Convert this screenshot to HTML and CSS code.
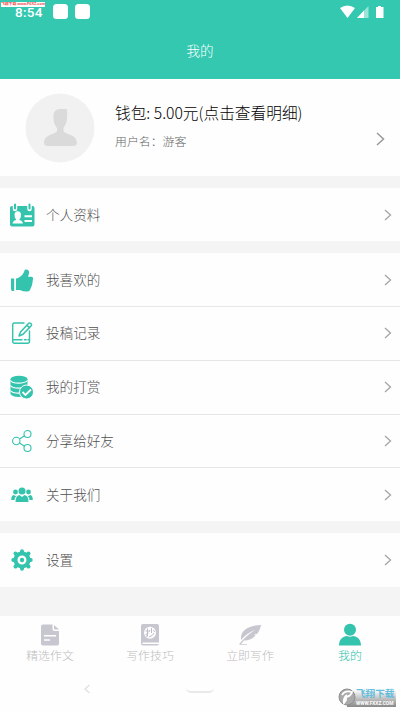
FILE: index.html
```html
<!DOCTYPE html>
<html lang="zh-CN">
<head>
<meta charset="utf-8">
<title>我的</title>
<link rel="stylesheet" href="styles.css">
</head>
<body>
<header class="header">
  <div class="status">
    <span class="clock">8:54</span><i class="note"></i><i class="note"></i>
    <svg class="signals" width="46" height="14" viewBox="0 0 46 14"><path d="M0 3Q7.500-2 15 3L7.500 13Z" fill="#fff"/><path d="M17 13 28.500 1V13Z" fill="#fff" opacity=".5"/><path d="M17 13 24 5.500V13Z" fill="#fff"/><path d="M38 1h3v1h2.500v11h-7.500V2H38Z" fill="#fff"/></svg>
  </div>
  <h1 class="title">我的</h1>
  <span class="stamp">飞翔下载 www.F0XZ.com</span>
</header>
<main class="main">
  <section class="profile">
    <svg class="avatar" viewBox="0 0 70 70"><circle cx="35" cy="35" r="34.500" fill="#f1f1f1"/><path d="M28.500 25C28 18 31 16 36 16h5.500q1 1 .5 9c0 5-2 7-3.500 10v3c2 4 13 3 13.500 11.500q0 3.500-4 3.500H23q-4 0-4-3.500C19.500 41 30 42 32 38v-3c-2-3-3.500-5-3.500-10Z" fill="#dadada"/></svg>
    <div class="info"><div class="wallet">钱包: 5.00元(点击查看明细)</div><div class="user">用户名：游客</div></div>
    <svg class="arrow arrow-big" viewBox="0 0 9 14"><path d="m1 1 6.500 6L1 13"/></svg>
  </section>
  <section class="group">
    <div class="row"><svg class="icon" viewBox="0 0 26 26"><rect x="1" y="4" width="24.500" height="20.500" rx="2" fill="#34c3ad"/><path d="M6 3v4M20.500 3v4" stroke="#fff" stroke-width="4.500" stroke-linecap="round"/><path d="M6 2.500v4M20.500 2.500v4" stroke="#34c3ad" stroke-width="2" stroke-linecap="round"/><path d="M5.500 13a3 3.500 0 0 1 6.500 0q0 3-1.500 4v1q3 .5 3.500 3.500H3.500q.5-3 3.500-3.500v-1q-1.500-1-1.500-4M15.500 13.200H23v2h-7.500ZM15.500 18H23v2h-7.500Z" fill="#fff"/></svg><span class="label">个人资料</span><svg class="arrow" viewBox="0 0 8 12"><path d="m1 1 5.500 5L1 11"/></svg></div>
  </section>
  <section class="group">
    <div class="row"><svg class="icon" viewBox="0 0 26 26"><path d="M2 11.500h3.200V24H3q-1-1-1-2ZM7 11.500c4-.5 7.500-4 8.500-8q1-1.700 3-.7c2.500 1.200 1.500 4.500.5 7h3.200q2.500 0 1.700 3-.3 6-3 10.500-.7 1.200-3 1.200-4 0-7-1.500H7Z" fill="#34c3ad"/></svg><span class="label">我喜欢的</span><svg class="arrow" viewBox="0 0 8 12"><path d="m1 1 5.500 5L1 11"/></svg></div>
    <div class="row"><svg class="icon" viewBox="0 0 26 26"><g fill="none" stroke="#34c3ad" stroke-width="1.400" stroke-linecap="round" stroke-linejoin="round"><path d="M15 3H5.500Q3.700 3 3.700 5v16.300q0 2 2 2H18.500q2 0 2-2V11M4 19.700h9M15.500 19.700h1.700M19 19.700h1.500"/><path d="M10 16l1.500-4L19.500 3.500q1-1 2.500 0 1.200 1.200 0 2.500L14 14.300ZM18 5.200l2.500 2.500" stroke-width="1.500"/></g></svg><span class="label">投稿记录</span><svg class="arrow" viewBox="0 0 8 12"><path d="m1 1 5.500 5L1 11"/></svg></div>
    <div class="row"><svg class="icon" viewBox="0 0 26 26"><path d="M1.500 5v15c2 4 14 4 17 0V5Z" fill="#34c3ad"/><ellipse cx="10" cy="5" rx="8.500" ry="3.200" fill="#34c3ad"/><path d="M1.500 6.500c2 3.500 14 3.500 17 0M1.500 11.500c2 3.500 14 3.500 17 0M1.500 16.500c2 3.500 14 3.500 17 0" fill="none" stroke="#fff" stroke-width="1.100"/><circle cx="17.500" cy="18" r="7" fill="#34c3ad" stroke="#fff"/><path d="m13.500 18 3 3 5.500-5.500" fill="none" stroke="#fff" stroke-width="1.800"/></svg><span class="label">我的打赏</span><svg class="arrow" viewBox="0 0 8 12"><path d="m1 1 5.500 5L1 11"/></svg></div>
    <div class="row"><svg class="icon" viewBox="0 0 26 26"><g fill="none" stroke="#34c3ad" stroke-width="1.100"><circle cx="7.300" cy="13" r="3.700"/><circle cx="18.500" cy="6" r="3.500"/><circle cx="18.500" cy="20" r="3.500"/><path d="m10.500 11 5-3.200M10.500 15l5 3.200"/></g></svg><span class="label">分享给好友</span><svg class="arrow" viewBox="0 0 8 12"><path d="m1 1 5.500 5L1 11"/></svg></div>
    <div class="row"><svg class="icon" viewBox="0 0 26 26"><g fill="#34c3ad"><circle cx="13" cy="9" r="3.500"/><circle cx="6.500" cy="10" r="2.400"/><circle cx="19.500" cy="10" r="2.400"/><path d="M6.500 20q0-6.500 4-7l2.500 2 2.500-2q4 .5 4 7ZM2.200 18q0-4.500 2.500-5l1.800 1 1.200-.4q-2 2-2.200 4.400ZM23.800 18q0-4.500-2.500-5l-1.800 1-1.200-.4q2 2 2.200 4.400Z"/></g></svg><span class="label">关于我们</span><svg class="arrow" viewBox="0 0 8 12"><path d="m1 1 5.500 5L1 11"/></svg></div>
  </section>
  <section class="group">
    <div class="row"><svg class="icon" viewBox="0 0 26 26"><g stroke="#34c3ad" fill="none"><path d="M13 4.300v17.400M4.300 13h17.400M6.500 6.500l13 13M19.500 6.500l-13 13" stroke-width="4" stroke-linecap="round"/><circle cx="13" cy="13" r="6.500" fill="#fff" stroke-width="4"/></g><circle cx="13" cy="13" r="2.200" fill="#34c3ad"/></svg><span class="label">设置</span><svg class="arrow" viewBox="0 0 8 12"><path d="m1 1 5.500 5L1 11"/></svg></div>
  </section>
</main>
<nav class="tabs">
  <div class="tab"><svg class="tab-icon" viewBox="0 0 24 24"><path d="M5 1.500h9.500V6q0 2 2 2H21v12.500q0 2-2 2H5q-2 0-2-2v-17q0-2 2-2M16 2l5 4.500h-4q-1 0-1-1Z" fill="#c7c7d0"/><path d="M6 12.700h12M6 17h6" stroke="#fff" stroke-width="1.500"/></svg><span>精选作文</span></div>
  <div class="tab"><svg class="tab-icon" viewBox="0 0 24 24"><rect x="3" y="1" width="18" height="21.500" rx="2" fill="#c7c7d0"/><path d="M4.500 19.500H21V21H4.500Z" fill="#fff"/><circle cx="12" cy="9.700" r="6" fill="#fff"/><g fill="none" stroke="#bdbdc9"><path d="M7.500 8h3M9.500 5.500v8L8 13M7.500 11.500l3-1.500M13.500 5v5M11.800 7l-.8 2M15.500 7l1 2M16 10q-1.500 3-5 4"/></g></svg><span>写作技巧</span></div>
  <div class="tab"><svg class="tab-icon" viewBox="0 0 24 24"><path d="M1.500 20.500Q9 12 17 7 9 10 3 17C2 6 12 2.500 23.500 2 22 4 22 8 19 11l-3 .5 1.500 1Q13 17.500 6 17.500l-3 3.500h6v.7H1.500Z" fill="#c7c7d0"/></svg><span>立即写作</span></div>
  <div class="tab active"><svg class="tab-icon" viewBox="0 0 24 24"><circle cx="12" cy="6.800" r="6" fill="#34c3ad"/><path d="M1 22.500c0-6 4-9.500 8-9.500q3 1.500 6 0c4 0 8 3.500 8 9.500Z" fill="#34c3ad"/></svg><span>我的</span></div>
</nav>
<footer class="system">
  <svg class="back" viewBox="0 0 6 10"><path d="M5.500 1 1 5l4.500 4" fill="none" stroke="#e0e0e0" stroke-width="1.300"/></svg>
  <i class="home"></i>
  <div class="brand"><svg class="brand-logo" viewBox="0 0 18 18"><circle cx="9" cy="9" r="8" fill="#aaa" stroke="#8e8e8e"/><path d="M4 7q3-5 10-3-1 4-6 5v3l-2 3q-1-5 3-8" fill="none" stroke="#fff" stroke-width="1.800"/></svg><div class="brand-text"><b>飞翔下载</b><small>WWW.FXXZ.COM</small></div></div>
</footer>
</body>
</html>
```
FILE: styles.css
```css
* { box-sizing: border-box; }
body {
  margin: 0;
  width: 400px;
  height: 711px;
  display: flex;
  flex-direction: column;
  overflow: hidden;
  background: #fefefe;
  color: #505050;
  font-family: Roboto, "Noto Sans CJK SC", sans-serif;
  font-weight: 300;
}
svg { display: block; flex: none; }
.header { position: relative; height: 79px; background: #34c8b1; color: #fff; }
.status { display: flex; align-items: center; height: 23px; padding: 0 15px; }
.clock { width: 38px; margin-top: 1px; font: 500 13.5px/10px Roboto, sans-serif; letter-spacing: 0.3px; }
.note { width: 15px; height: 15px; margin-right: 7px; border-radius: 3.5px; background: #fff; }
.signals { margin-left: auto; margin-right: -1px; }
.title { margin: 0; height: 56px; line-height: 57px; text-align: center; font-size: 13.5px; font-weight: 300; }
.stamp {
  position: absolute; left: 1px; top: 2px; width: 44px; height: 5px;
  overflow: hidden; background: #fff; color: #e44; white-space: nowrap;
  font: 700 3.8px/5px "Liberation Sans", "Noto Sans CJK SC", sans-serif;
}
.main { height: 538px; background: #f4f4f4; }
.profile { display: flex; height: 97px; padding: 0 15px 0 25px; background: #fefefe; }
.avatar { width: 70px; height: 70px; margin-top: 14px; }
.info { margin-left: 20px; padding-top: 22px; flex: 1; }
.wallet { color: #000; font-family: "Noto Sans CJK SC", sans-serif; font-size: 15.7px; line-height: 24px; font-weight: 300; white-space: nowrap; }
.user { margin-top: 7px; font-size: 11.9px; line-height: 20px; color: #666; }
.arrow { width: 8px; height: 12px; margin-left: auto; fill: none; stroke: #a5a5a5; stroke-width: 1.3; }
.arrow-big { width: 9px; height: 14px; margin-top: 53px; stroke: #999; stroke-width: 1.5; }
.group { margin-top: 12px; background: #fefefe; }
.row { display: flex; align-items: center; height: 53px; padding: 0 8.5px 0 9px; }
.row + .row { height: 53.75px; border-top: 1px solid #e6e6e6; }
.group:last-child .row { height: 54px; }
.icon { width: 26px; height: 26px; }
.label { margin-left: 11px; font-size: 13.6px; line-height: 20px; }
.tabs { display: flex; height: 51px; margin-top: -1px; background: #fefefe; }
.tab { display: flex; flex: 1; flex-direction: column; align-items: center; padding-top: 7px; color: #bdbdbd; font-size: 11.9px; line-height: 18px; }
.tab-icon { width: 24px; height: 24px; }
.active { color: #2bbfa8; }
.system { display: flex; align-items: flex-start; height: 44px; }
.back { width: 6px; height: 10px; margin: 17px 0 0 84px; }
.home { width: 28px; height: 8px; margin: 18px 0 0 96px; border: solid #e9e9e9; border-width: 0 0 2px; border-radius: 0 0 5px 5px; }
.brand { display: flex; margin: 21px 0 0 124px; width: 58px; height: 19px; background: linear-gradient(90deg, #fff 9px, transparent 9px), linear-gradient(#fff 10%, #bbb 60%, #888); }
.brand-logo { width: 18px; height: 18px; }
.brand-text { width: 40px; overflow: hidden; white-space: nowrap; }
.brand-text b { display: block; color: #64bddb; font-size: 9.6px; line-height: 12px; font-weight: 700; }
.brand-text small { display: block; color: #fff; font-size: 4.8px; line-height: 7px; font-weight: 700; }
```
